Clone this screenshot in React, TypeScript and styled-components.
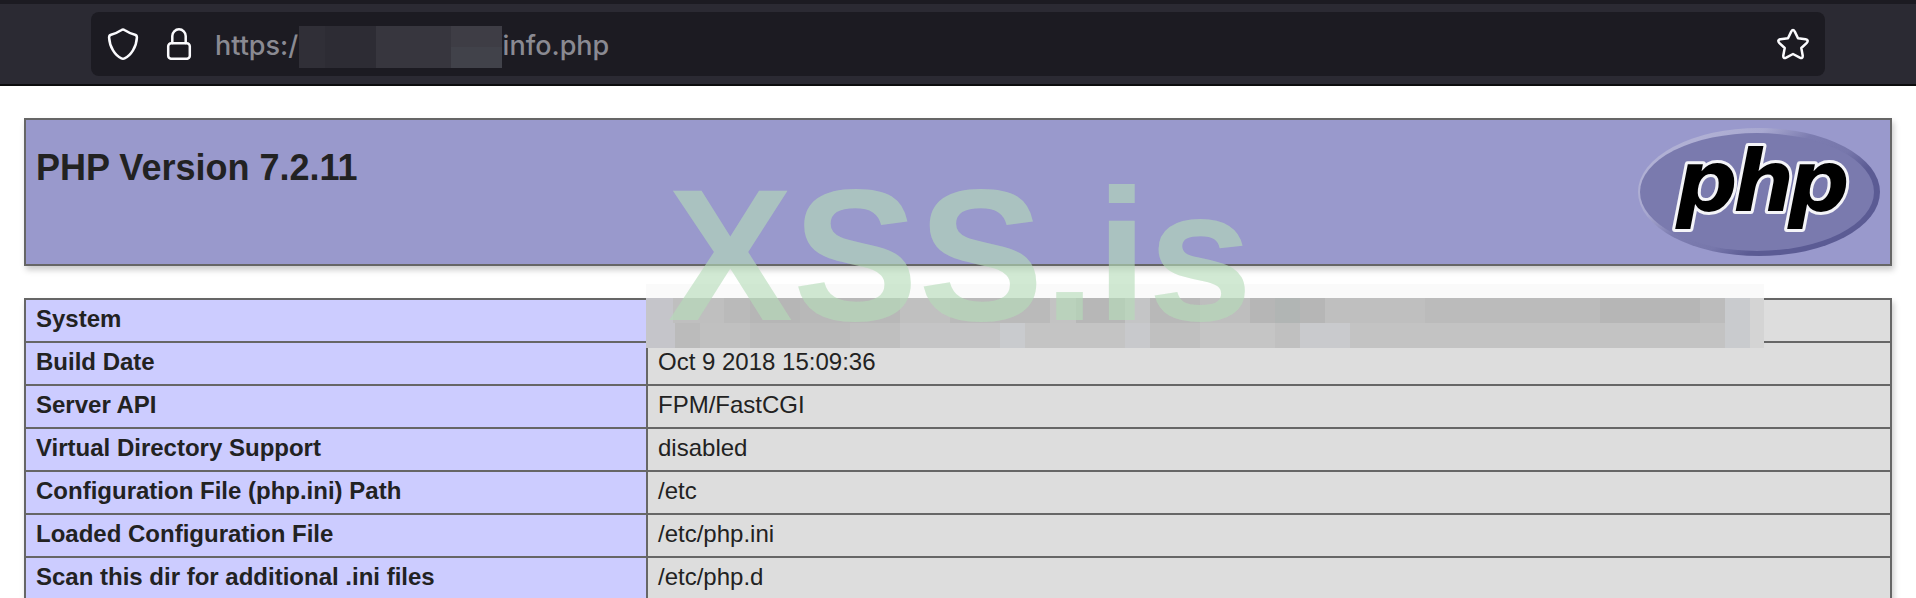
import React, { useState } from 'react';
import styled, { createGlobalStyle } from 'styled-components';

const Global = createGlobalStyle`
  *, *::before, *::after { box-sizing: border-box; }
  html { overflow: hidden; }
  body { margin: 0; background: #fff; color: #222; font-family: "Liberation Sans", Arial, sans-serif; }
`;

const Toolbar = styled.header`
  padding: 8px 91px;
  background: #2b2a33;
  border-top: 4px solid #1c1b22;
  border-bottom: 2px solid #0c0c0d;
`;

const AddressBar = styled.div`
  display: flex;
  align-items: center;
  gap: 16px;
  height: 64px;
  padding: 0 12px;
  border-radius: 8px;
  background: #1c1b22;
`;

const IconButton = styled.button`
  display: flex;
  flex: none;
  align-items: center;
  justify-content: center;
  width: 40px;
  height: 40px;
  padding: 0;
  border: 0;
  background: none;
  color: #fbfbfe;
`;

const Icon = styled.svg`
  width: 32px;
  height: 32px;
  fill: none;
  stroke: currentColor;
  stroke-width: 2.5;
  stroke-linecap: round;
  stroke-linejoin: round;
`;

const UrlField = styled.div`
  position: relative;
  flex: 1;
`;

const UrlInput = styled.input`
  display: block;
  width: 100%;
  height: 44px;
  padding: 2px 0 0;
  border: 0;
  outline: 0;
  background: none;
  color: #8a8a92;
  font: 500 27px/40px Inter, sans-serif;
`;

const HostMask = styled.span`
  position: absolute;
  top: 4px;
  left: 84px;
  width: 203px;
  height: 42px;
  background:
    linear-gradient(#41424a, #41424a) right bottom / 51px 21px no-repeat,
    linear-gradient(90deg, #302f37 0 26px, #2d2c34 26px 77px, #37363e 77px 152px, #3e3d45 152px);
`;

const Page = styled.main`
  padding: 32px 24px 0;
`;

const Banner = styled.section`
  display: flex;
  justify-content: space-between;
  align-items: flex-start;
  height: 148px;
  padding: 8px 10px;
  border: 2px solid #666;
  background: #9999cc;
  box-shadow: 2px 4px 6px #ccc;
`;

const Title = styled.h1`
  margin: 20px 0 0;
  font-size: 36px;
  line-height: 40px;
`;

const LogoLink = styled.a`
  display: block;
  flex: none;
  width: 242px;
  height: 128px;
`;

const LogoText = styled.text`
  font: italic bold 86px "DejaVu Sans", sans-serif;
  fill: #000;
  stroke: #f4f4f8;
  stroke-width: 6px;
  stroke-linejoin: round;
  paint-order: stroke;
`;

const Info = styled.section`
  position: relative;
  margin-top: 32px;
`;

const Table = styled.table`
  width: 100%;
  border-collapse: collapse;
  table-layout: fixed;
  box-shadow: 2px 4px 6px #ccc;
  font-size: 24px;
  line-height: 27px;
`;

const Name = styled.th`
  width: 622px;
  height: 43px;
  padding: 5px 10px 9px;
  border: 2px solid #666;
  background: #ccccff;
  text-align: left;
`;

const Value = styled.td`
  height: 43px;
  padding: 5px 10px 9px;
  border: 2px solid #666;
  background: #ddd;
`;

const Mosaic = styled.div`
  position: absolute;
  top: -14px;
  left: 622px;
  width: 1118px;
  border-top: 14px solid #fafafa;
`;

const MosaicRow = styled.div`
  display: flex;
  height: 25px;
`;

const Block = styled.span<{ $span: number; $tone: string }>`
  flex: ${(p) => p.$span} 1 0;
  background: ${(p) => p.$tone};
`;

const Watermark = styled.div`
  position: absolute;
  top: 161px;
  left: 0;
  right: 0;
  padding-left: 4px;
  color: rgba(181, 219, 184, 0.62);
  font-size: 188px;
  font-weight: bold;
  line-height: 188px;
  text-align: center;
  pointer-events: none;
`;

const upper: [number, string][] = [
  [27, '#c5c5ca'], [51, '#bfbfbf'], [26, '#bababa'], [50, '#b6b6b6'], [100, '#b8b8b8'],
  [50, '#c0c0c0'], [100, '#bababa'], [26, '#c3c3c3'], [49, '#b7b7b7'], [25, '#c4c5c6'],
  [50, '#b8b8b8'], [50, '#bebebe'], [25, '#b6b6b6'], [25, '#b1b5b4'], [25, '#b6b6b6'],
  [100, '#bfbfbf'], [175, '#bbbbbb'], [100, '#b6b6b6'], [25, '#bcbcbc'], [25, '#c9cbce'], [14, '#d4d4d4'],
];

const lower: [number, string][] = [
  [29, '#c5c5ca'], [25, '#bbbbbb'], [50, '#c0c0c0'], [100, '#bcbcbc'], [50, '#bfbfbf'],
  [100, '#c5c5c6'], [25, '#c9cbce'], [100, '#c4c4c4'], [25, '#c8c9cc'], [50, '#c0c0c0'],
  [75, '#c5c5c5'], [25, '#c0c0c0'], [50, '#c9cacd'], [375, '#c3c3c3'], [25, '#c9cbce'], [14, '#d4d4d4'],
];

const settings: [string, string][] = [
  ['System', ''],
  ['Build Date', 'Oct 9 2018 15:09:36'],
  ['Server API', 'FPM/FastCGI'],
  ['Virtual Directory Support', 'disabled'],
  ['Configuration File (php.ini) Path', '/etc'],
  ['Loaded Configuration File', '/etc/php.ini'],
  ['Scan this dir for additional .ini files', '/etc/php.d'],
];

function PhpLogo() {
  return (
    <svg width="242" height="128" viewBox="0 0 242 128" role="img" aria-label="PHP logo">
      <defs>
        <linearGradient id="rim" gradientUnits="userSpaceOnUse" x1="75" y1="0" x2="167" y2="128">
          <stop offset="0" stopColor="#b0b0d4" />
          <stop offset="0.2" stopColor="#a8a8d0" />
          <stop offset="0.4" stopColor="#7c7cb0" />
          <stop offset="0.62" stopColor="#7777ab" />
          <stop offset="0.78" stopColor="#5b5b94" />
          <stop offset="1" stopColor="#5b5b94" />
        </linearGradient>
      </defs>
      <ellipse cx="121" cy="64" rx="121" ry="64" fill="url(#rim)" />
      <ellipse cx="119" cy="64" rx="117" ry="59" fill="#7a7aae" />
      <LogoText y="83" x="38 95 150">php</LogoText>
    </svg>
  );
}

function AddressField() {
  const [url, setUrl] = useState('https:/' + ' '.repeat(27) + '/info.php');
  return (
    <UrlField>
      <UrlInput aria-label="Address" type="text" spellCheck={false} value={url} onChange={(e) => setUrl(e.target.value)} />
      <HostMask />
    </UrlField>
  );
}

export default function App() {
  return (
    <>
      <Global />
      <Toolbar>
        <AddressBar>
          <IconButton type="button" aria-label="Tracking protection">
            <Icon viewBox="0 0 32 32">
              <path d="M14.6 2Q16 1 17.4 2Q22 5 28 6.8Q30 7.4 29.9 9.6C29.4 19 24 27.5 17.6 30.4Q16 31.1 14.4 30.4C8 27.5 2.6 19 2.1 9.6Q2 7.4 4 6.8Q10 5 14.6 2Z" />
            </Icon>
          </IconButton>
          <IconButton type="button" aria-label="Connection security">
            <Icon viewBox="0 0 32 32">
              <rect x="5.2" y="15.2" width="21.6" height="15.6" rx="3" />
              <path d="M9.3 15V8a6.7 6.7 0 0 1 13.4 0v7" />
            </Icon>
          </IconButton>
          <AddressField />
          <IconButton type="button" aria-label="Bookmark this page">
            <Icon viewBox="0 0 32 32">
              <path d="M14.2 3.6Q16 .6 17.8 3.6L21 10.3L28.6 11.3Q32 12 29.8 14.8L24.3 20L25.7 27.4Q26 31 22.8 29.6L16 26L9.2 29.6Q6 31 6.3 27.4L7.7 20L2.2 14.8Q0 12 3.4 11.3L11 10.3Z" />
            </Icon>
          </IconButton>
        </AddressBar>
      </Toolbar>
      <Page>
        <Banner>
          <Title>PHP Version 7.2.11</Title>
          <LogoLink href="#"><PhpLogo /></LogoLink>
        </Banner>
        <Info>
          <Table>
            <tbody>
              {settings.map(([name, value]) => (
                <tr key={name}>
                  <Name scope="row">{name}</Name>
                  <Value>{value}</Value>
                </tr>
              ))}
            </tbody>
          </Table>
          <Mosaic>
            {[upper, lower].map((row, r) => (
              <MosaicRow key={r}>
                {row.map(([span, tone], i) => <Block key={i} $span={span} $tone={tone} />)}
              </MosaicRow>
            ))}
          </Mosaic>
        </Info>
      </Page>
      <Watermark>XSS.is</Watermark>
    </>
  );
}
